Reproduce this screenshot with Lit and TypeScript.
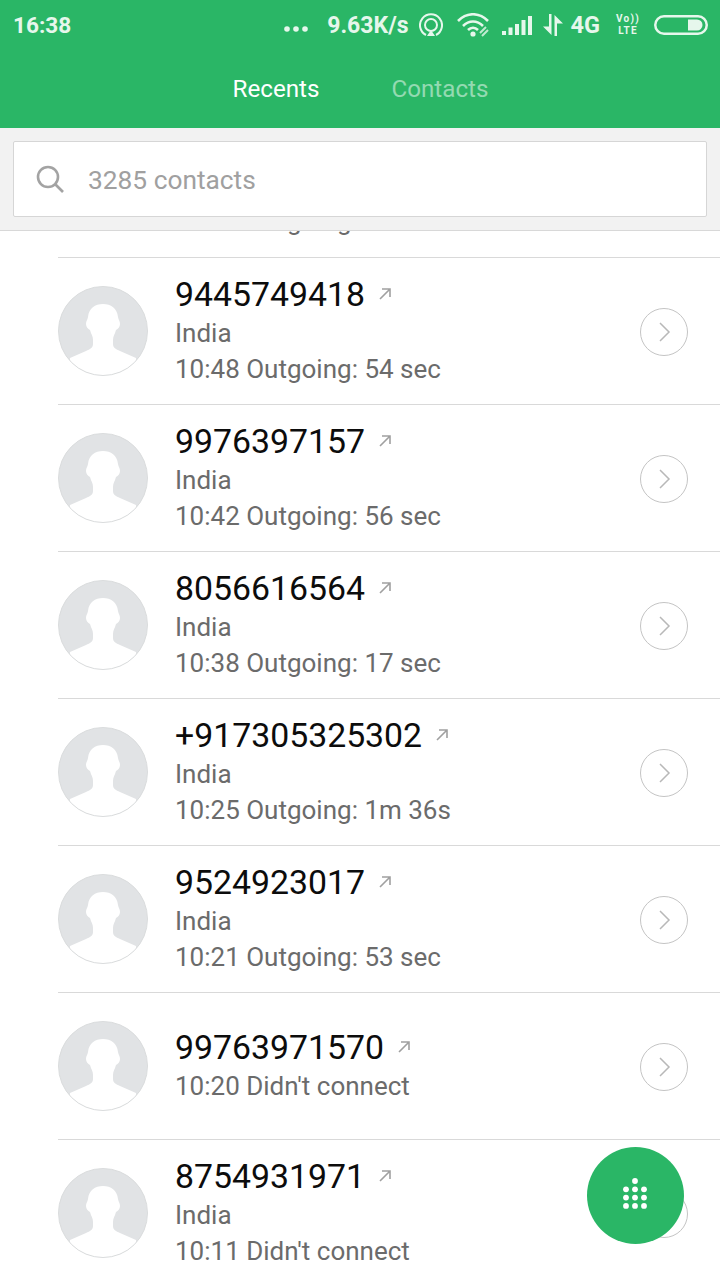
import { LitElement, css, html, svg } from "lit";
import { customElement } from "lit/decorators.js";

type Call = {
  number: string;
  region?: string;
  detail: string;
};

const calls: Call[] = [
  { number: "9445749418", region: "India", detail: "10:48 Outgoing: 54 sec" },
  { number: "9976397157", region: "India", detail: "10:42 Outgoing: 56 sec" },
  { number: "8056616564", region: "India", detail: "10:38 Outgoing: 17 sec" },
  { number: "+917305325302", region: "India", detail: "10:25 Outgoing: 1m 36s" },
  { number: "9524923017", region: "India", detail: "10:21 Outgoing: 53 sec" },
  { number: "99763971570", detail: "10:20 Didn't connect" },
  { number: "8754931971", region: "India", detail: "10:11 Didn't connect" },
];

const avatar = html`<svg class="avatar" viewBox="0 0 90 90">
  <defs>
    <clipPath id="face"><circle cx="45" cy="45" r="44.5" /></clipPath>
  </defs>
  <circle cx="45" cy="45" r="44.5" fill="#e1e3e5" />
  <path
    clip-path="url(#face)"
    fill="#fff"
    d="M45 18C53 18 59 22 60 31C60.5 34 62 35 62 38C62 41 60 43 58 44C57 48 55 50 55 54V58C55 62 58 63 62 65L78 72V90H12V72L28 65C32 63 35 62 35 58V54C35 50 33 48 32 44C30 43 28 41 28 38C28 35 29.5 34 30 31C31 22 37 18 45 18Z"
  />
  <circle cx="45" cy="45" r="44.5" fill="none" stroke="#dadcdd" stroke-width="1" />
</svg>`;

const outgoing = html`<svg class="outgoing" viewBox="0 0 14 14">
  <path d="M2 12L12 2M4 2H12V10" fill="none" stroke="#a0a0a0" stroke-width="1.6" />
</svg>`;

const chevron = html`<svg class="chevron" viewBox="0 0 48 48">
  <circle cx="24" cy="24" r="23.5" fill="#fff" stroke="#c4c4c4" stroke-width="1" />
  <path d="M20 15L29 24L20 33" fill="none" stroke="#b8b8b8" stroke-width="1.5" />
</svg>`;

// dial pad: one dot on top of a 3x3 grid
const padDots = [
  [14, 5],
  [5, 13.3],
  [14, 13.3],
  [23, 13.3],
  [5, 21.6],
  [14, 21.6],
  [23, 21.6],
  [5, 29.9],
  [14, 29.9],
  [23, 29.9],
];

@customElement("status-bar")
export class StatusBar extends LitElement {
  static styles = css`
    :host {
      display: flex;
      align-items: center;
      height: 50px;
      padding: 0 12px 0 13px;
      color: #e6f7ec;
      font-family: Roboto, "Liberation Sans", sans-serif;
      font-weight: 700;
    }
    .time {
      font-size: 22.6px;
      margin-right: auto;
    }
    .dots {
      width: 24px;
      height: 6px;
      margin: 8px 19px 0 0;
    }
    .speed {
      font-size: 23px;
      margin-right: 11px;
    }
    .hotspot {
      width: 24px;
      height: 24px;
      margin-right: 14px;
    }
    .wifi {
      width: 34px;
      height: 24px;
      margin-right: 11px;
    }
    .signal {
      width: 30px;
      height: 20px;
      margin-right: 11px;
    }
    .arrows {
      width: 20px;
      height: 22px;
      margin-right: 7px;
    }
    .net {
      font-size: 23.5px;
      margin-right: 16px;
    }
    .volte {
      display: flex;
      flex-direction: column;
      align-items: center;
      width: 24px;
      margin-right: 14px;
      font-size: 10px;
      line-height: 12px;
      letter-spacing: 1.2px;
    }
    .battery {
      width: 54px;
      height: 20px;
    }
  `;

  render() {
    return html`
      <span class="time">16:38</span>
      <svg class="dots" viewBox="0 0 24 6" fill="currentColor">
        <circle cx="3" cy="3" r="2.8" />
        <circle cx="12" cy="3" r="2.8" />
        <circle cx="21" cy="3" r="2.8" />
      </svg>
      <span class="speed">9.63K/s</span>
      <svg class="hotspot" viewBox="0 0 24 24" fill="none" stroke="currentColor" stroke-width="2">
        <path d="M7 22A11 11 0 1 1 17 22" />
        <circle cx="12" cy="12" r="6" />
        <path d="M12 17L16 23H8Z" fill="currentColor" stroke="none" />
      </svg>
      <svg class="wifi" viewBox="0 0 34 24" fill="none" stroke="currentColor" stroke-width="2.6">
        <path d="M1 8C10 -1 22 -1 31 8" />
        <path d="M6 13C12 7 20 7 26 13" />
        <path d="M11 17C14 14 18 14 21 17" />
        <circle cx="16" cy="21" r="2.6" fill="currentColor" stroke="none" />
        <path d="M23 20L29 14M25 23L31 17" stroke-width="2" opacity="0.8" />
      </svg>
      <svg class="signal" viewBox="0 0 30 20" fill="currentColor">
        <rect x="0" y="16" width="4" height="4" />
        <rect x="6.5" y="12.5" width="4" height="7.5" />
        <rect x="13" y="9" width="4" height="11" />
        <rect x="19.5" y="5" width="4" height="15" />
        <rect x="26" y="1" width="4" height="19" />
      </svg>
      <svg class="arrows" viewBox="0 0 20 22" fill="currentColor">
        <path d="M6 0H8.5V21L0 12.5H6Z" />
        <path d="M11.5 1L20 9.5H14V22H11.5Z" />
      </svg>
      <span class="net">4G</span>
      <span class="volte"><span>Vo))</span><span>LTE</span></span>
      <svg class="battery" viewBox="0 0 54 20">
        <rect x="1.25" y="1.25" width="51.5" height="17.5" rx="8.75" fill="none" stroke="currentColor" stroke-width="2.5" />
        <path d="M34 4.5H43A5.5 5.5 0 0 1 43 15.5H34Z" fill="currentColor" />
      </svg>
    `;
  }
}

@customElement("call-row")
export class CallRow extends LitElement {
  static properties = {
    call: { attribute: false },
  };

  declare call: Call;

  static styles = css`
    :host {
      display: flex;
      align-items: center;
      box-sizing: border-box;
      height: 147px;
      margin-left: 58px;
      padding-right: 32px;
      border-bottom: 1px solid #d9d9d9;
      font-family: Roboto, "Liberation Sans", sans-serif;
    }
    .avatar {
      flex: none;
      width: 90px;
      height: 90px;
      margin-right: 27px;
    }
    .text {
      flex: 1;
      min-width: 0;
    }
    .number {
      display: flex;
      align-items: center;
      box-sizing: border-box;
      height: 42px;
      padding-bottom: 2px;
      color: #0c0c0c;
      font-size: 33.8px;
    }
    .outgoing {
      width: 14px;
      height: 14px;
      margin: 0 0 0 13px;
    }
    .sub {
      height: 36px;
      color: #6b6b6b;
      font-size: 26px;
      line-height: 34px;
    }
    .chevron {
      flex: none;
      width: 48px;
      height: 48px;
      margin-top: 2px;
    }
  `;

  render() {
    const { number, region, detail } = this.call;
    return html`
      ${avatar}
      <div class="text">
        <div class="number">${number}${outgoing}</div>
        ${region ? html`<div class="sub">${region}</div>` : null}
        <div class="sub">${detail}</div>
      </div>
      ${chevron}
    `;
  }
}

@customElement("app-root")
export class AppRoot extends LitElement {
  static styles = css`
    :host {
      display: flex;
      flex-direction: column;
      position: relative;
      height: 1280px;
      overflow: hidden;
      background: #fff;
      font-family: Roboto, "Liberation Sans", sans-serif;
    }
    .header {
      flex: none;
      height: 128px;
      background: #2ab666;
    }
    .tabs {
      display: flex;
      justify-content: center;
      gap: 72px;
      padding: 19px 0 0 1px;
      color: #fff;
      font-size: 24.2px;
      line-height: 40px;
    }
    .tabs .idle {
      color: rgba(255, 255, 255, 0.5);
    }
    .search-wrap {
      flex: none;
      box-sizing: border-box;
      height: 103px;
      padding: 13px 13px 0;
      background: #f2f2f2;
      border-bottom: 1px solid #d8d8d8;
    }
    .search {
      display: flex;
      align-items: center;
      box-sizing: border-box;
      height: 76px;
      padding-left: 22px;
      background: #fff;
      border: 1px solid #d6d6d6;
      border-radius: 2px;
      color: #a0a0a0;
      font-size: 26.3px;
    }
    .search svg {
      width: 28px;
      height: 28px;
      margin-right: 24px;
    }
    .search span {
      margin-top: 2px;
    }
    .list {
      flex: 1;
      min-height: 0;
      overflow: hidden;
    }
    /* tail of the row scrolled under the search bar */
    .peek {
      box-sizing: border-box;
      height: 27px;
      margin-left: 58px;
      padding-left: 117px;
      overflow: hidden;
      border-bottom: 1px solid #d9d9d9;
      color: #6b6b6b;
      font-size: 26px;
      line-height: 34px;
    }
    .peek div {
      margin-top: -27px;
    }
    .fab {
      position: absolute;
      left: 587px;
      top: 1147px;
      width: 97px;
      height: 97px;
      border-radius: 50%;
      background: #2ab666;
    }
    .fab svg {
      display: block;
      width: 97px;
      height: 97px;
    }
  `;

  render() {
    return html`
      <div class="header">
        <status-bar></status-bar>
        <div class="tabs">
          <span>Recents</span>
          <span class="idle">Contacts</span>
        </div>
      </div>
      <div class="search-wrap">
        <div class="search">
          <svg viewBox="0 0 28 28" fill="none" stroke="#a3a3a3" stroke-width="2.6">
            <circle cx="12" cy="12" r="10" />
            <path d="M19 19L27 27" />
          </svg>
          <span>3285 contacts</span>
        </div>
      </div>
      <div class="list">
        <div class="peek"><div>10:52 Outgoing: 12 sec</div></div>
        ${calls.map((call) => html`<call-row .call=${call}></call-row>`)}
      </div>
      <div class="fab">
        <svg viewBox="0 0 97 97">
          <g transform="translate(34 29)" fill="#fff">
            ${padDots.map(([x, y]) => svg`<circle cx=${x} cy=${y} r="2.9" />`)}
          </g>
        </svg>
      </div>
    `;
  }
}
